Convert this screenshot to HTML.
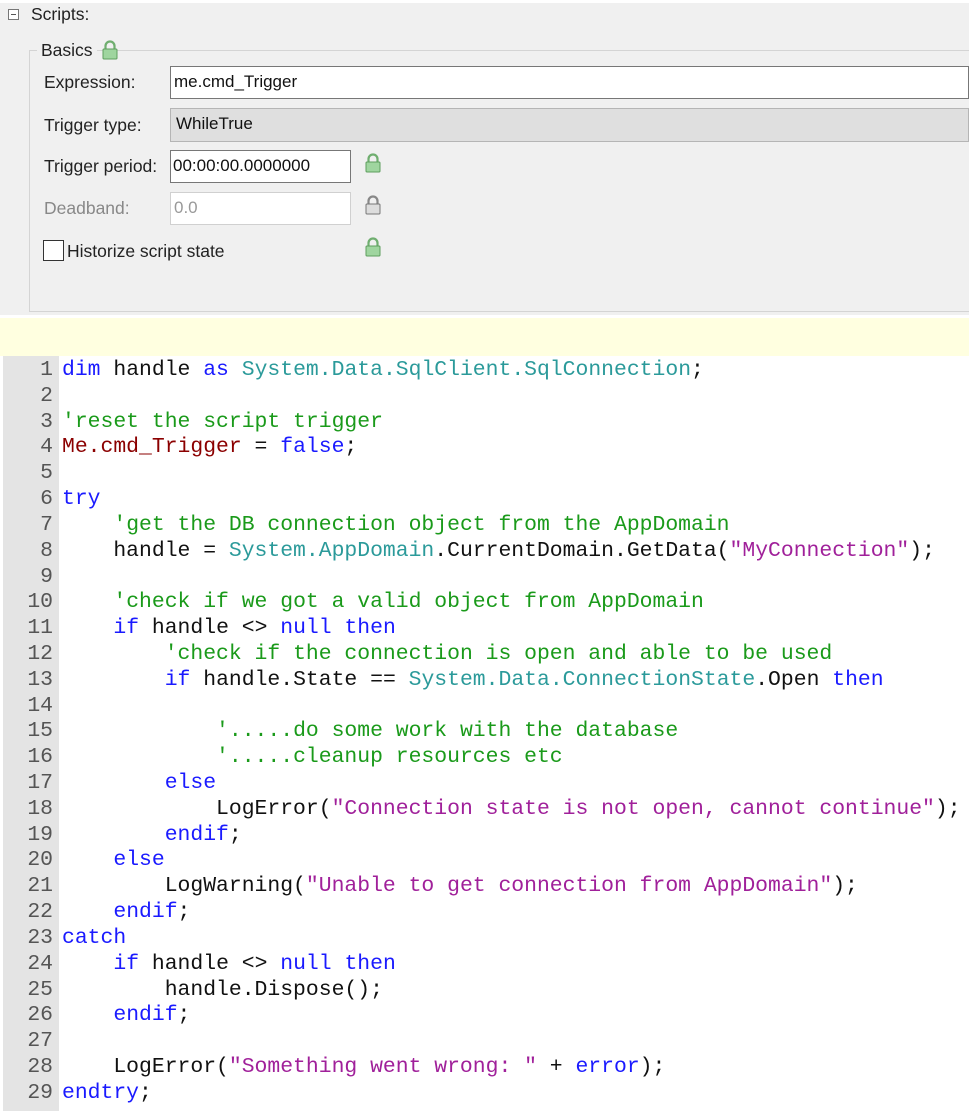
<!DOCTYPE html>
<html><head><meta charset="utf-8"><style>
body{margin:0;width:974px;height:1115px;background:#fff;position:relative;overflow:hidden;font-family:"Liberation Sans",sans-serif;}
.a{position:absolute;}
.top{left:0;top:3px;width:969px;height:312px;background:#f0f0f0;}
.ui{font-size:17.5px;color:#222;}
.box{position:absolute;background:#fff;border:1px solid #8a8a8a;box-sizing:border-box;font-size:17px;padding-left:3px;line-height:30px;color:#111;}
.lock{position:absolute;width:18px;height:20px;}
.gut{position:absolute;left:3px;top:356px;width:56px;height:755px;background:#e4e4e4;}
pre{margin:0;font-family:"Liberation Mono",monospace;font-size:21.4px;line-height:25.82px;}
.ln{position:absolute;left:3px;top:358px;width:50px;text-align:right;color:#555;}
.src{position:absolute;left:62px;top:358px;color:#111;}
.k{color:#1a1aff}.t{color:#2b9a9a}.c{color:#1a9a1a}.s{color:#a0209a}.m{color:#8b0000}
</style></head><body>
<div class="a top"></div>
<div class="a" style="left:8px;top:9px;width:11px;height:11px;border:1px solid #777;background:#fff;box-sizing:border-box"></div>
<div class="a" style="left:11px;top:14px;width:5px;height:1px;background:#555"></div>
<div class="a ui" style="left:31px;top:4px">Scripts:</div>
<div class="a" style="left:29px;top:50px;width:940px;height:262px;border:1px solid #d4d4d4;border-right:none;box-sizing:border-box"></div>
<div class="a ui" style="left:37px;top:40px;background:#f0f0f0;padding:0 4px;">Basics</div>
<svg class="lock" style="left:101px;top:40px" viewBox="0 0 18 20"><path d="M4.5 9V6a4.5 4.5 0 0 1 9 0v3" fill="none" stroke="#6fae6f" stroke-width="2.2"/><rect x="2" y="9" width="14" height="10" rx="1" fill="#9fd59f" stroke="#5e9e5e"/></svg>
<div class="a ui" style="left:44px;top:72px">Expression:</div>
<div class="box" style="left:170px;top:66px;width:799px;height:33px;border-color:#777">me.cmd_Trigger</div>
<div class="a ui" style="left:44px;top:115px">Trigger type:</div>
<div class="box" style="left:170px;top:108px;width:799px;height:34px;background:#dfdfdf;border-color:#b5b5b5;padding-left:5px">WhileTrue</div>
<div class="a ui" style="left:44px;top:156px">Trigger period:</div>
<div class="box" style="left:170px;top:150px;width:181px;height:33px;border-color:#777;padding-left:2px">00:00:00.0000000</div>
<svg class="lock" style="left:364px;top:153px" viewBox="0 0 18 20"><path d="M4.5 9V6a4.5 4.5 0 0 1 9 0v3" fill="none" stroke="#6fae6f" stroke-width="2.2"/><rect x="2" y="9" width="14" height="10" rx="1" fill="#9fd59f" stroke="#5e9e5e"/></svg>
<div class="a ui" style="left:44px;top:198px;color:#888">Deadband:</div>
<div class="box" style="left:170px;top:192px;width:181px;height:33px;border-color:#d0d0d0;color:#999;padding-left:3px">0.0</div>
<svg class="lock" style="left:364px;top:195px" viewBox="0 0 18 20"><path d="M4.5 9V6a4.5 4.5 0 0 1 9 0v3" fill="none" stroke="#888" stroke-width="2.2"/><rect x="2" y="9" width="14" height="10" rx="1" fill="#ddd" stroke="#777"/></svg>
<div class="a" style="left:43px;top:240px;width:21px;height:21px;border:1.5px solid #333;background:#fff;box-sizing:border-box"></div>
<div class="a ui" style="left:67px;top:241px">Historize script state</div>
<svg class="lock" style="left:364px;top:237px" viewBox="0 0 18 20"><path d="M4.5 9V6a4.5 4.5 0 0 1 9 0v3" fill="none" stroke="#6fae6f" stroke-width="2.2"/><rect x="2" y="9" width="14" height="10" rx="1" fill="#9fd59f" stroke="#5e9e5e"/></svg>
<div class="a" style="left:0;top:318px;width:969px;height:38px;background:#ffffe0"></div>
<div class="gut"></div>
<pre class="ln">1
2
3
4
5
6
7
8
9
10
11
12
13
14
15
16
17
18
19
20
21
22
23
24
25
26
27
28
29</pre>
<pre class="src"><span class="k">dim</span> handle <span class="k">as</span> <span class="t">System.Data.SqlClient.SqlConnection</span>;

<span class="c">'reset the script trigger</span>
<span class="m">Me.cmd_Trigger</span> = <span class="k">false</span>;

<span class="k">try</span>
    <span class="c">'get the DB connection object from the AppDomain</span>
    handle = <span class="t">System.AppDomain</span>.CurrentDomain.GetData(<span class="s">"MyConnection"</span>);

    <span class="c">'check if we got a valid object from AppDomain</span>
    <span class="k">if</span> handle &lt;&gt; <span class="k">null</span> <span class="k">then</span>
        <span class="c">'check if the connection is open and able to be used</span>
        <span class="k">if</span> handle.State == <span class="t">System.Data.ConnectionState</span>.Open <span class="k">then</span>

            <span class="c">'.....do some work with the database</span>
            <span class="c">'.....cleanup resources etc</span>
        <span class="k">else</span>
            LogError(<span class="s">"Connection state is not open, cannot continue"</span>);
        <span class="k">endif</span>;
    <span class="k">else</span>
        LogWarning(<span class="s">"Unable to get connection from AppDomain"</span>);
    <span class="k">endif</span>;
<span class="k">catch</span>
    <span class="k">if</span> handle &lt;&gt; <span class="k">null</span> <span class="k">then</span>
        handle.Dispose();
    <span class="k">endif</span>;

    LogError(<span class="s">"Something went wrong: "</span> + <span class="k">error</span>);
<span class="k">endtry</span>;</pre>
</body></html>
